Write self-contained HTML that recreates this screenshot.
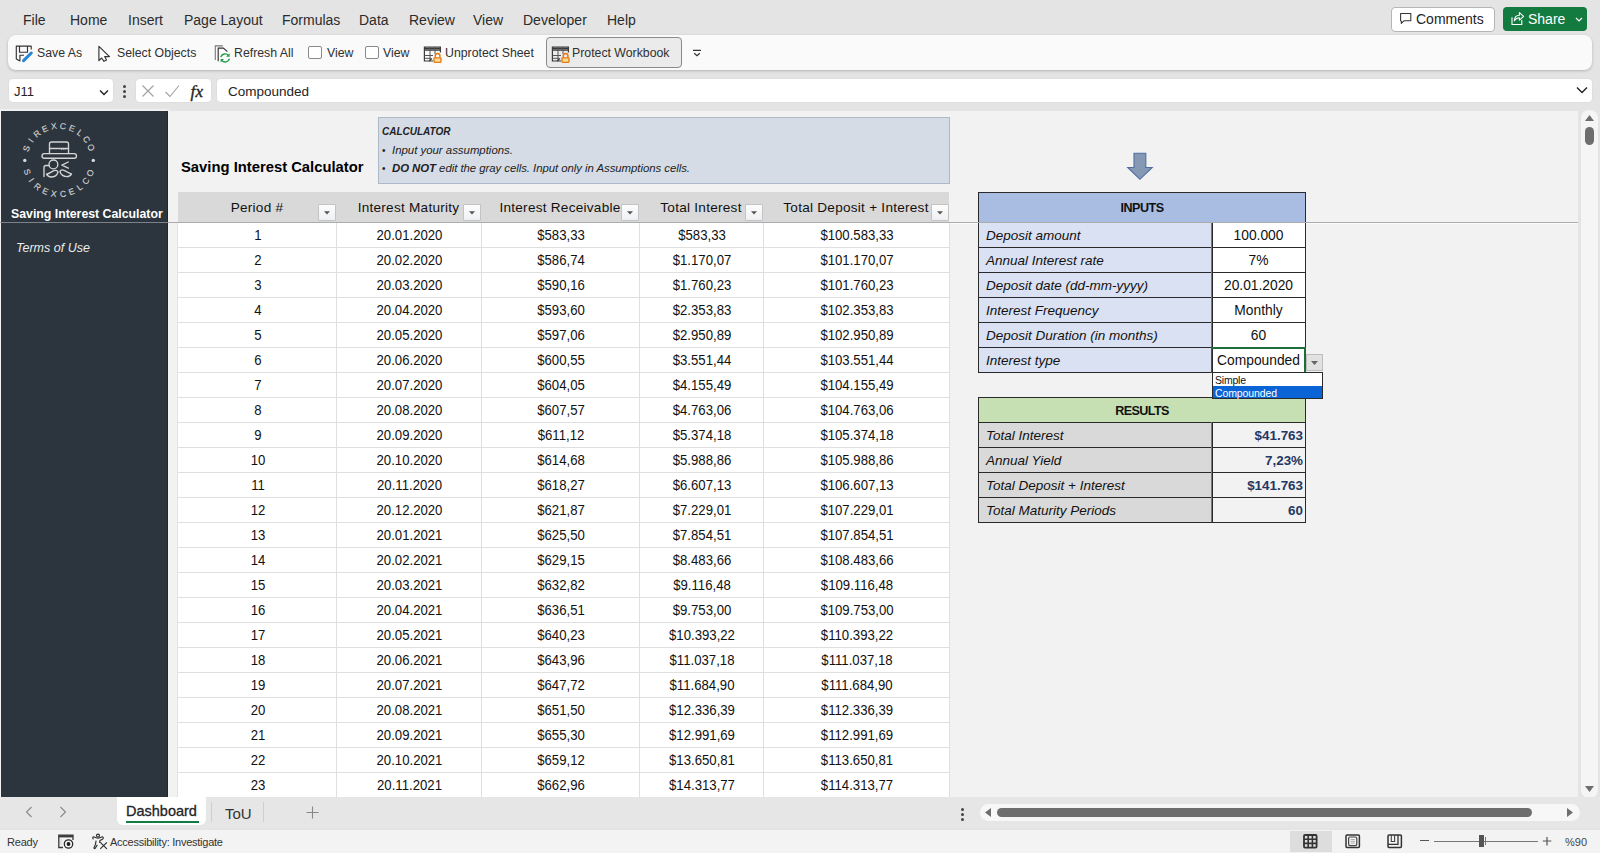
<!DOCTYPE html>
<html><head><meta charset="utf-8"><title>Saving Interest Calculator</title>
<style>
html,body{margin:0;padding:0;}
body{width:1600px;height:853px;overflow:hidden;position:relative;background:#e4e4e4;font-family:"Liberation Sans",sans-serif;}
.a{position:absolute;}
.t{position:absolute;line-height:1;white-space:nowrap;}
svg{position:absolute;overflow:visible;}
</style></head><body>
<div class="t" style="left:23px;top:13.15px;font-size:14px;color:#2b2b2b;">File</div>
<div class="t" style="left:70px;top:13.15px;font-size:14px;color:#2b2b2b;">Home</div>
<div class="t" style="left:128px;top:13.15px;font-size:14px;color:#2b2b2b;">Insert</div>
<div class="t" style="left:184px;top:13.15px;font-size:14px;color:#2b2b2b;">Page Layout</div>
<div class="t" style="left:282px;top:13.15px;font-size:14px;color:#2b2b2b;">Formulas</div>
<div class="t" style="left:359px;top:13.15px;font-size:14px;color:#2b2b2b;">Data</div>
<div class="t" style="left:409px;top:13.15px;font-size:14px;color:#2b2b2b;">Review</div>
<div class="t" style="left:473px;top:13.15px;font-size:14px;color:#2b2b2b;">View</div>
<div class="t" style="left:523px;top:13.15px;font-size:14px;color:#2b2b2b;">Developer</div>
<div class="t" style="left:607px;top:13.15px;font-size:14px;color:#2b2b2b;">Help</div>
<div class="a" style="left:1391px;top:6.5px;width:104px;height:25px;background:#fff;border:1px solid #b5b5b5;border-radius:4px;box-sizing:border-box;"></div>
<svg style="left:1399px;top:12px" width="14" height="14" viewBox="0 0 14 14"><path d="M1.6 1.4H11.8V8.7H5.2L2.3 11.4V9.2L1.6 8.7Z" fill="none" stroke="#333" stroke-width="1.05" stroke-linejoin="round"/></svg><div class="t" style="left:1416px;top:12.15px;font-size:14px;color:#242424;">Comments</div>
<div class="a" style="left:1503px;top:7px;width:84px;height:24px;background:#137b40;border-radius:4px;"></div>
<svg style="left:1510px;top:10px" width="16" height="16" viewBox="0 0 16 16"><path d="M2 7.3V14.5H11.8V10" fill="none" stroke="#fff" stroke-width="1.1"/><path d="M4.3 10.8C4.5 7.2 6.8 5.3 9.4 5.3V2.6L13.6 6.4L9.4 10.1V7.8C7.5 7.8 5.6 8.8 4.3 10.8Z" fill="none" stroke="#fff" stroke-width="1.1" stroke-linejoin="round"/></svg>
<div class="t" style="left:1528px;top:12.15px;font-size:14px;color:#fff;">Share</div>
<svg style="left:1575px;top:17px" width="8" height="5" viewBox="0 0 8 5"><path d="M1 1l3 3 3-3" fill="none" stroke="#fff" stroke-width="1.2"/></svg>
<div class="a" style="left:8px;top:35px;width:1584px;height:35px;background:#fafafa;border-radius:8px;box-shadow:0 1px 3px rgba(0,0,0,0.22);"></div>
<svg style="left:15px;top:45px" width="18" height="18" viewBox="0 0 18 18"><path d="M16.2 4.6V1.1H1.3V13.9L4.9 16V10.2H9" fill="none" stroke="#333" stroke-width="1.15" stroke-linejoin="round"/><path d="M4.5 1.1V7.2H12.5V1.1" fill="none" stroke="#333" stroke-width="1.15"/><path d="M8.6 15.6L16.3 8" stroke="#2486d6" stroke-width="3" stroke-linecap="round"/><path d="M7.4 16.8l1.2-3.2 2 2z" fill="#2486d6"/></svg>
<div class="t" style="left:37px;top:47.09px;font-size:12.3px;color:#303030;">Save As</div>
<svg style="left:97px;top:45px" width="14" height="18" viewBox="0 0 14 18"><path d="M1.9 1.4V15.7L4.6 13L7 16.3L9.5 15.1L7.7 11.6H12.5Z" fill="none" stroke="#333" stroke-width="1.15" stroke-linejoin="round"/></svg>
<div class="t" style="left:117px;top:47.09px;font-size:12.3px;color:#303030;">Select Objects</div>
<svg style="left:214px;top:44px" width="18" height="19" viewBox="0 0 18 19"><path d="M1.3 16.1V1.9H8.8" fill="none" stroke="#777" stroke-width="1.1"/><path d="M4.2 17.3V4.1H9.4L13.4 7.6" fill="none" stroke="#333" stroke-width="1.15"/><path d="M6.8 13.2a4.3 4.3 0 0 1 7.6-1.6M15.4 14.6a4.3 4.3 0 0 1-7.6 1.8" fill="none" stroke="#1f9d46" stroke-width="1.4"/><path d="M15.6 9.3v3.4h-3.4z" fill="#1f9d46"/><path d="M6.6 18.4v-3.4h3.4z" fill="#1f9d46"/></svg>
<div class="t" style="left:234px;top:47.09px;font-size:12.3px;color:#303030;">Refresh All</div>
<div class="a" style="left:308px;top:45.5px;width:14px;height:13.5px;border:1px solid #8a8a8a;border-radius:2px;box-sizing:border-box;background:#fff;"></div>
<div class="t" style="left:327px;top:47.09px;font-size:12.3px;color:#303030;">View</div>
<div class="a" style="left:365px;top:45.5px;width:14px;height:13.5px;border:1px solid #8a8a8a;border-radius:2px;box-sizing:border-box;background:#fff;"></div>
<div class="t" style="left:383px;top:47.09px;font-size:12.3px;color:#303030;">View</div>
<svg style="left:423px;top:44px" width="19" height="19" viewBox="0 0 19 19"><path d="M10.2 17H1.4V3H17.4V8.5" fill="none" stroke="#3a3a3a" stroke-width="1.2"/><path d="M1.4 4.6H17.4" stroke="#3a3a3a" stroke-width="2.2"/><path d="M1.4 6.4H17.4M1.4 11.5H10M1.4 14.3H8M7 3V17M12 3V10" fill="none" stroke="#555" stroke-width="1"/><path d="M6 17L9 14.5" stroke="#3a3a3a" stroke-width="1.1"/><rect x="11" y="13.8" width="7" height="4.6" rx="0.8" fill="#f7dc8e" stroke="#e67812" stroke-width="1.3"/><path d="M12.3 13.6V11.7a2.3 2.3 0 0 1 4.6 0V13.6" fill="none" stroke="#e67812" stroke-width="1.5"/></svg>
<div class="t" style="left:445px;top:47.09px;font-size:12.3px;color:#303030;">Unprotect Sheet</div>
<div class="a" style="left:546px;top:37px;width:136px;height:31px;background:#ebebeb;border:1px solid #8a8a8a;border-radius:4px;box-sizing:border-box;"></div>
<svg style="left:551px;top:44px" width="19" height="19" viewBox="0 0 19 19"><path d="M10.2 17H1.4V3H17.4V8.5" fill="none" stroke="#3a3a3a" stroke-width="1.2"/><path d="M1.4 4.6H17.4" stroke="#3a3a3a" stroke-width="2.2"/><path d="M1.4 6.4H17.4M1.4 11.5H10M1.4 14.3H8M7 3V17M12 3V10" fill="none" stroke="#555" stroke-width="1"/><path d="M6 17L9 14.5" stroke="#3a3a3a" stroke-width="1.1"/><rect x="11" y="13.8" width="7" height="4.6" rx="0.8" fill="#f7dc8e" stroke="#e67812" stroke-width="1.3"/><path d="M12.3 13.6V11.7a2.3 2.3 0 0 1 4.6 0V13.6" fill="none" stroke="#e67812" stroke-width="1.5"/></svg>
<div class="t" style="left:572px;top:47.09px;font-size:12.3px;color:#303030;">Protect Workbook</div>
<svg style="left:692px;top:48px" width="10" height="10" viewBox="0 0 10 10"><path d="M1 2.3h8M2.2 5.2l2.8 2.6 2.8-2.6" fill="none" stroke="#333" stroke-width="1.2"/></svg>
<div class="a" style="left:9px;top:79px;width:104px;height:23px;background:#fff;border-radius:4px;box-shadow:0 0 0 0.5px #d8d8d8;"></div>
<div class="t" style="left:14px;top:85.00px;font-size:13px;color:#242424;">J11</div>
<svg style="left:99px;top:89px" width="10" height="7" viewBox="0 0 10 7"><path d="M1 1.5l4 4 4-4" fill="none" stroke="#222" stroke-width="1.4"/></svg>
<div class="a" style="left:123px;top:85px;width:3px;height:3px;background:#444;border-radius:50%;"></div>
<div class="a" style="left:123px;top:90px;width:3px;height:3px;background:#444;border-radius:50%;"></div>
<div class="a" style="left:123px;top:95px;width:3px;height:3px;background:#444;border-radius:50%;"></div>
<div class="a" style="left:136px;top:79px;width:75px;height:23px;background:#fff;border-radius:4px;box-shadow:0 0 0 0.5px #d8d8d8;"></div>
<svg style="left:141px;top:84px" width="14" height="14" viewBox="0 0 14 14"><path d="M1.5 1.5l11 11M12.5 1.5l-11 11" stroke="#a0a0a0" stroke-width="1.1"/></svg>
<svg style="left:164px;top:84px" width="16" height="14" viewBox="0 0 16 14"><path d="M1.5 8l4.5 4.5 9-11" fill="none" stroke="#a0a0a0" stroke-width="1.1"/></svg>
<div class="t" style="left:190.5px;top:82.61px;font-size:17px;color:#222;font-family:Liberation Serif,serif;-webkit-text-stroke:0.35px #222;letter-spacing:0.3px;"><i>fx</i></div>
<div class="a" style="left:217px;top:79px;width:1375px;height:23px;background:#fff;border-radius:4px;box-shadow:0 0 0 0.5px #d8d8d8;"></div>
<div class="t" style="left:228px;top:84.57px;font-size:13.5px;color:#242424;">Compounded</div>
<svg style="left:1576px;top:86px" width="12" height="8" viewBox="0 0 12 8"><path d="M1 1.5l5 5 5-5" fill="none" stroke="#222" stroke-width="1.4"/></svg>
<div class="a" style="left:0px;top:111px;width:1578px;height:686px;background:#f2f2f2;"></div>
<div class="a" style="left:0px;top:109px;width:169px;height:2px;background:#efefef;"></div>
<div class="a" style="left:1px;top:111px;width:167px;height:686px;background:#2c353d;"></div>
<div class="a" style="left:167px;top:111px;width:1px;height:686px;background:#1f262d;"></div>
<svg style="left:10px;top:115px" width="100" height="90" viewBox="0 0 100 90">
<g font-family="Liberation Sans" font-size="8.6" fill="#d2d2d2" stroke="#d2d2d2" stroke-width="0.15" text-anchor="middle" dominant-baseline="central"><text x="16.49" y="33.57" transform="rotate(-70.0 16.49 33.57)">S</text><text x="20.77" y="25.39" transform="rotate(-54.7 20.77 25.39)">I</text><text x="27.07" y="18.64" transform="rotate(-39.3 27.07 18.64)">R</text><text x="34.93" y="13.79" transform="rotate(-24.0 34.93 13.79)">E</text><text x="43.79" y="11.20" transform="rotate(-8.7 43.79 11.20)">X</text><text x="53.02" y="11.03" transform="rotate(6.7 53.02 11.03)">C</text><text x="61.96" y="13.32" transform="rotate(22.0 61.96 13.32)">E</text><text x="69.98" y="17.89" transform="rotate(37.3 69.98 17.89)">L</text><text x="76.51" y="24.42" transform="rotate(52.7 76.51 24.42)">C</text><text x="81.08" y="32.44" transform="rotate(68.0 81.08 32.44)">O</text><text x="17.24" y="56.96" transform="rotate(70.0 17.24 56.96)">S</text><text x="21.43" y="64.95" transform="rotate(54.7 21.43 64.95)">I</text><text x="27.58" y="71.54" transform="rotate(39.3 27.58 71.54)">R</text><text x="35.25" y="76.28" transform="rotate(24.0 35.25 76.28)">E</text><text x="43.91" y="78.81" transform="rotate(8.7 43.91 78.81)">X</text><text x="52.92" y="78.97" transform="rotate(-6.7 52.92 78.97)">C</text><text x="61.66" y="76.74" transform="rotate(-22.0 61.66 76.74)">E</text><text x="69.50" y="72.28" transform="rotate(-37.3 69.50 72.28)">L</text><text x="75.88" y="65.90" transform="rotate(-52.7 75.88 65.90)">C</text><text x="80.34" y="58.06" transform="rotate(-68.0 80.34 58.06)">O</text></g>
<circle cx="14.8" cy="45.4" r="1.7" fill="#d9d9d9"/><circle cx="83.3" cy="45.4" r="1.7" fill="#d9d9d9"/>
<g fill="none" stroke="#d4d4d4" stroke-width="1.35" stroke-linecap="round" stroke-linejoin="round">
<path d="M39.5 38.5v-9.5a2 2 0 0 1 2-2h15a2 2 0 0 1 2 2v9.5"/>
<path d="M39.5 33.5h19"/>
<rect x="32" y="38.6" width="34.5" height="4.6" rx="2.3"/>
<circle cx="43.4" cy="49.4" r="4.4"/>
<path d="M34 61.5v-9a2 2 0 0 1 2-2h3"/>
<path d="M58.3 47l-6.4 3.1 6.4 3.1"/>
<path d="M36.5 59.2c3 -0.5 5 -2.5 7.5-3.5c2-0.8 4 -0.2 4 1.5c-1 3-4 4.8-7 4.8c-2 0-3.5-1-4.5-2.8z"/>
<path d="M61.5 58.8c-3 -0.5 -5 -2.5 -7.5-3.5c-2-0.8 -4 -0.2 -4 1.5c1 3 4 4.8 7 4.8c2 0 3.5-1 4.5-2.8z"/>
</g><path d="M51 34.2h5" stroke="#d9d9d9" stroke-width="1" stroke-dasharray="1 0.8"/></svg>
<div class="t" style="left:11px;top:207.59px;font-size:12.3px;color:#fff;font-weight:bold;">Saving Interest Calculator</div>
<div class="t" style="left:16px;top:241.92px;font-size:12.5px;color:#ebebeb;font-style:italic;">Terms of Use</div>
<div class="t" style="left:181px;top:159.97px;font-size:14.8px;color:#000;font-weight:bold;">Saving Interest Calculator</div>
<div class="a" style="left:378px;top:117px;width:572px;height:67px;background:#d6dce5;border:1px solid #adb9ca;box-sizing:border-box;"></div>
<div class="t" style="left:382px;top:126.53px;font-size:10px;color:#222;font-weight:bold;font-style:italic;">CALCULATOR</div>
<div class="t" style="left:382px;top:146.03px;font-size:10px;color:#222;">&bull;</div>
<div class="t" style="left:392px;top:144.85px;font-size:11.4px;color:#222;font-style:italic;">Input your assumptions.</div>
<div class="t" style="left:382px;top:164.03px;font-size:10px;color:#222;">&bull;</div>
<div class="t" style="left:392px;top:162.85px;font-size:11.4px;color:#222;font-style:italic;letter-spacing:-0.05px;"><b>DO NOT</b> edit the gray cells. Input only in Assumptions cells.</div>
<div class="a" style="left:178px;top:192px;width:771px;height:30px;background:#d9d9d9;"></div>
<div class="a" style="left:178px;top:223px;width:771px;height:574px;background:#fff;"></div>
<div class="a" style="left:177px;top:223px;width:1px;height:574px;background:#e2e2e2;"></div>
<div class="t" style="left:178px;top:201.49px;font-size:13.6px;color:#111;letter-spacing:0.25px;width:158px;text-align:center;">Period #</div>
<div class="a" style="left:318px;top:204px;width:18px;height:17px;background:linear-gradient(#fdfdfd,#eef0f3);border:1px solid #c3c3c3;border-radius:1px;box-sizing:border-box;"></div>
<svg style="left:324px;top:211px" width="6" height="4" viewBox="0 0 6 4"><path d="M0 0.3h6L3 3.6z" fill="#555"/></svg>
<div class="t" style="left:336px;top:201.49px;font-size:13.6px;color:#111;letter-spacing:0.25px;width:145px;text-align:center;">Interest Maturity</div>
<div class="a" style="left:463px;top:204px;width:18px;height:17px;background:linear-gradient(#fdfdfd,#eef0f3);border:1px solid #c3c3c3;border-radius:1px;box-sizing:border-box;"></div>
<svg style="left:469px;top:211px" width="6" height="4" viewBox="0 0 6 4"><path d="M0 0.3h6L3 3.6z" fill="#555"/></svg>
<div class="t" style="left:481px;top:201.49px;font-size:13.6px;color:#111;letter-spacing:0.25px;width:158px;text-align:center;">Interest Receivable</div>
<div class="a" style="left:621px;top:204px;width:18px;height:17px;background:linear-gradient(#fdfdfd,#eef0f3);border:1px solid #c3c3c3;border-radius:1px;box-sizing:border-box;"></div>
<svg style="left:627px;top:211px" width="6" height="4" viewBox="0 0 6 4"><path d="M0 0.3h6L3 3.6z" fill="#555"/></svg>
<div class="t" style="left:639px;top:201.49px;font-size:13.6px;color:#111;letter-spacing:0.25px;width:124px;text-align:center;">Total Interest</div>
<div class="a" style="left:745px;top:204px;width:18px;height:17px;background:linear-gradient(#fdfdfd,#eef0f3);border:1px solid #c3c3c3;border-radius:1px;box-sizing:border-box;"></div>
<svg style="left:751px;top:211px" width="6" height="4" viewBox="0 0 6 4"><path d="M0 0.3h6L3 3.6z" fill="#555"/></svg>
<div class="t" style="left:763px;top:201.49px;font-size:13.6px;color:#111;letter-spacing:0.25px;width:186px;text-align:center;">Total Deposit + Interest</div>
<div class="a" style="left:931px;top:204px;width:18px;height:17px;background:linear-gradient(#fdfdfd,#eef0f3);border:1px solid #c3c3c3;border-radius:1px;box-sizing:border-box;"></div>
<svg style="left:937px;top:211px" width="6" height="4" viewBox="0 0 6 4"><path d="M0 0.3h6L3 3.6z" fill="#555"/></svg>
<div class="a" style="left:178px;top:247px;width:771px;height:1px;background:#dfdfdf;"></div>
<div class="a" style="left:178px;top:272px;width:771px;height:1px;background:#dfdfdf;"></div>
<div class="a" style="left:178px;top:297px;width:771px;height:1px;background:#dfdfdf;"></div>
<div class="a" style="left:178px;top:322px;width:771px;height:1px;background:#dfdfdf;"></div>
<div class="a" style="left:178px;top:347px;width:771px;height:1px;background:#dfdfdf;"></div>
<div class="a" style="left:178px;top:372px;width:771px;height:1px;background:#dfdfdf;"></div>
<div class="a" style="left:178px;top:397px;width:771px;height:1px;background:#dfdfdf;"></div>
<div class="a" style="left:178px;top:422px;width:771px;height:1px;background:#dfdfdf;"></div>
<div class="a" style="left:178px;top:447px;width:771px;height:1px;background:#dfdfdf;"></div>
<div class="a" style="left:178px;top:472px;width:771px;height:1px;background:#dfdfdf;"></div>
<div class="a" style="left:178px;top:497px;width:771px;height:1px;background:#dfdfdf;"></div>
<div class="a" style="left:178px;top:522px;width:771px;height:1px;background:#dfdfdf;"></div>
<div class="a" style="left:178px;top:547px;width:771px;height:1px;background:#dfdfdf;"></div>
<div class="a" style="left:178px;top:572px;width:771px;height:1px;background:#dfdfdf;"></div>
<div class="a" style="left:178px;top:597px;width:771px;height:1px;background:#dfdfdf;"></div>
<div class="a" style="left:178px;top:622px;width:771px;height:1px;background:#dfdfdf;"></div>
<div class="a" style="left:178px;top:647px;width:771px;height:1px;background:#dfdfdf;"></div>
<div class="a" style="left:178px;top:672px;width:771px;height:1px;background:#dfdfdf;"></div>
<div class="a" style="left:178px;top:697px;width:771px;height:1px;background:#dfdfdf;"></div>
<div class="a" style="left:178px;top:722px;width:771px;height:1px;background:#dfdfdf;"></div>
<div class="a" style="left:178px;top:747px;width:771px;height:1px;background:#dfdfdf;"></div>
<div class="a" style="left:178px;top:772px;width:771px;height:1px;background:#dfdfdf;"></div>
<div class="a" style="left:178px;top:797px;width:771px;height:1px;background:#dfdfdf;"></div>
<div class="a" style="left:336px;top:223px;width:1px;height:574px;background:#dfdfdf;"></div>
<div class="a" style="left:481px;top:223px;width:1px;height:574px;background:#dfdfdf;"></div>
<div class="a" style="left:639px;top:223px;width:1px;height:574px;background:#dfdfdf;"></div>
<div class="a" style="left:763px;top:223px;width:1px;height:574px;background:#dfdfdf;"></div>
<div class="a" style="left:949px;top:223px;width:1px;height:574px;background:#dfdfdf;"></div>
<div class="t" style="left:178.8px;top:227.81px;font-size:14.4px;color:#111;width:158px;text-align:center;transform:scaleX(0.915);">1</div>
<div class="t" style="left:336.8px;top:227.81px;font-size:14.4px;color:#111;width:145px;text-align:center;transform:scaleX(0.915);">20.01.2020</div>
<div class="t" style="left:481.8px;top:227.81px;font-size:14.4px;color:#111;width:158px;text-align:center;transform:scaleX(0.915);">$583,33</div>
<div class="t" style="left:639.8px;top:227.81px;font-size:14.4px;color:#111;width:124px;text-align:center;transform:scaleX(0.915);">$583,33</div>
<div class="t" style="left:763.8px;top:227.81px;font-size:14.4px;color:#111;width:186px;text-align:center;transform:scaleX(0.915);">$100.583,33</div>
<div class="t" style="left:178.8px;top:252.81px;font-size:14.4px;color:#111;width:158px;text-align:center;transform:scaleX(0.915);">2</div>
<div class="t" style="left:336.8px;top:252.81px;font-size:14.4px;color:#111;width:145px;text-align:center;transform:scaleX(0.915);">20.02.2020</div>
<div class="t" style="left:481.8px;top:252.81px;font-size:14.4px;color:#111;width:158px;text-align:center;transform:scaleX(0.915);">$586,74</div>
<div class="t" style="left:639.8px;top:252.81px;font-size:14.4px;color:#111;width:124px;text-align:center;transform:scaleX(0.915);">$1.170,07</div>
<div class="t" style="left:763.8px;top:252.81px;font-size:14.4px;color:#111;width:186px;text-align:center;transform:scaleX(0.915);">$101.170,07</div>
<div class="t" style="left:178.8px;top:277.81px;font-size:14.4px;color:#111;width:158px;text-align:center;transform:scaleX(0.915);">3</div>
<div class="t" style="left:336.8px;top:277.81px;font-size:14.4px;color:#111;width:145px;text-align:center;transform:scaleX(0.915);">20.03.2020</div>
<div class="t" style="left:481.8px;top:277.81px;font-size:14.4px;color:#111;width:158px;text-align:center;transform:scaleX(0.915);">$590,16</div>
<div class="t" style="left:639.8px;top:277.81px;font-size:14.4px;color:#111;width:124px;text-align:center;transform:scaleX(0.915);">$1.760,23</div>
<div class="t" style="left:763.8px;top:277.81px;font-size:14.4px;color:#111;width:186px;text-align:center;transform:scaleX(0.915);">$101.760,23</div>
<div class="t" style="left:178.8px;top:302.81px;font-size:14.4px;color:#111;width:158px;text-align:center;transform:scaleX(0.915);">4</div>
<div class="t" style="left:336.8px;top:302.81px;font-size:14.4px;color:#111;width:145px;text-align:center;transform:scaleX(0.915);">20.04.2020</div>
<div class="t" style="left:481.8px;top:302.81px;font-size:14.4px;color:#111;width:158px;text-align:center;transform:scaleX(0.915);">$593,60</div>
<div class="t" style="left:639.8px;top:302.81px;font-size:14.4px;color:#111;width:124px;text-align:center;transform:scaleX(0.915);">$2.353,83</div>
<div class="t" style="left:763.8px;top:302.81px;font-size:14.4px;color:#111;width:186px;text-align:center;transform:scaleX(0.915);">$102.353,83</div>
<div class="t" style="left:178.8px;top:327.81px;font-size:14.4px;color:#111;width:158px;text-align:center;transform:scaleX(0.915);">5</div>
<div class="t" style="left:336.8px;top:327.81px;font-size:14.4px;color:#111;width:145px;text-align:center;transform:scaleX(0.915);">20.05.2020</div>
<div class="t" style="left:481.8px;top:327.81px;font-size:14.4px;color:#111;width:158px;text-align:center;transform:scaleX(0.915);">$597,06</div>
<div class="t" style="left:639.8px;top:327.81px;font-size:14.4px;color:#111;width:124px;text-align:center;transform:scaleX(0.915);">$2.950,89</div>
<div class="t" style="left:763.8px;top:327.81px;font-size:14.4px;color:#111;width:186px;text-align:center;transform:scaleX(0.915);">$102.950,89</div>
<div class="t" style="left:178.8px;top:352.81px;font-size:14.4px;color:#111;width:158px;text-align:center;transform:scaleX(0.915);">6</div>
<div class="t" style="left:336.8px;top:352.81px;font-size:14.4px;color:#111;width:145px;text-align:center;transform:scaleX(0.915);">20.06.2020</div>
<div class="t" style="left:481.8px;top:352.81px;font-size:14.4px;color:#111;width:158px;text-align:center;transform:scaleX(0.915);">$600,55</div>
<div class="t" style="left:639.8px;top:352.81px;font-size:14.4px;color:#111;width:124px;text-align:center;transform:scaleX(0.915);">$3.551,44</div>
<div class="t" style="left:763.8px;top:352.81px;font-size:14.4px;color:#111;width:186px;text-align:center;transform:scaleX(0.915);">$103.551,44</div>
<div class="t" style="left:178.8px;top:377.81px;font-size:14.4px;color:#111;width:158px;text-align:center;transform:scaleX(0.915);">7</div>
<div class="t" style="left:336.8px;top:377.81px;font-size:14.4px;color:#111;width:145px;text-align:center;transform:scaleX(0.915);">20.07.2020</div>
<div class="t" style="left:481.8px;top:377.81px;font-size:14.4px;color:#111;width:158px;text-align:center;transform:scaleX(0.915);">$604,05</div>
<div class="t" style="left:639.8px;top:377.81px;font-size:14.4px;color:#111;width:124px;text-align:center;transform:scaleX(0.915);">$4.155,49</div>
<div class="t" style="left:763.8px;top:377.81px;font-size:14.4px;color:#111;width:186px;text-align:center;transform:scaleX(0.915);">$104.155,49</div>
<div class="t" style="left:178.8px;top:402.81px;font-size:14.4px;color:#111;width:158px;text-align:center;transform:scaleX(0.915);">8</div>
<div class="t" style="left:336.8px;top:402.81px;font-size:14.4px;color:#111;width:145px;text-align:center;transform:scaleX(0.915);">20.08.2020</div>
<div class="t" style="left:481.8px;top:402.81px;font-size:14.4px;color:#111;width:158px;text-align:center;transform:scaleX(0.915);">$607,57</div>
<div class="t" style="left:639.8px;top:402.81px;font-size:14.4px;color:#111;width:124px;text-align:center;transform:scaleX(0.915);">$4.763,06</div>
<div class="t" style="left:763.8px;top:402.81px;font-size:14.4px;color:#111;width:186px;text-align:center;transform:scaleX(0.915);">$104.763,06</div>
<div class="t" style="left:178.8px;top:427.81px;font-size:14.4px;color:#111;width:158px;text-align:center;transform:scaleX(0.915);">9</div>
<div class="t" style="left:336.8px;top:427.81px;font-size:14.4px;color:#111;width:145px;text-align:center;transform:scaleX(0.915);">20.09.2020</div>
<div class="t" style="left:481.8px;top:427.81px;font-size:14.4px;color:#111;width:158px;text-align:center;transform:scaleX(0.915);">$611,12</div>
<div class="t" style="left:639.8px;top:427.81px;font-size:14.4px;color:#111;width:124px;text-align:center;transform:scaleX(0.915);">$5.374,18</div>
<div class="t" style="left:763.8px;top:427.81px;font-size:14.4px;color:#111;width:186px;text-align:center;transform:scaleX(0.915);">$105.374,18</div>
<div class="t" style="left:178.8px;top:452.81px;font-size:14.4px;color:#111;width:158px;text-align:center;transform:scaleX(0.915);">10</div>
<div class="t" style="left:336.8px;top:452.81px;font-size:14.4px;color:#111;width:145px;text-align:center;transform:scaleX(0.915);">20.10.2020</div>
<div class="t" style="left:481.8px;top:452.81px;font-size:14.4px;color:#111;width:158px;text-align:center;transform:scaleX(0.915);">$614,68</div>
<div class="t" style="left:639.8px;top:452.81px;font-size:14.4px;color:#111;width:124px;text-align:center;transform:scaleX(0.915);">$5.988,86</div>
<div class="t" style="left:763.8px;top:452.81px;font-size:14.4px;color:#111;width:186px;text-align:center;transform:scaleX(0.915);">$105.988,86</div>
<div class="t" style="left:178.8px;top:477.81px;font-size:14.4px;color:#111;width:158px;text-align:center;transform:scaleX(0.915);">11</div>
<div class="t" style="left:336.8px;top:477.81px;font-size:14.4px;color:#111;width:145px;text-align:center;transform:scaleX(0.915);">20.11.2020</div>
<div class="t" style="left:481.8px;top:477.81px;font-size:14.4px;color:#111;width:158px;text-align:center;transform:scaleX(0.915);">$618,27</div>
<div class="t" style="left:639.8px;top:477.81px;font-size:14.4px;color:#111;width:124px;text-align:center;transform:scaleX(0.915);">$6.607,13</div>
<div class="t" style="left:763.8px;top:477.81px;font-size:14.4px;color:#111;width:186px;text-align:center;transform:scaleX(0.915);">$106.607,13</div>
<div class="t" style="left:178.8px;top:502.81px;font-size:14.4px;color:#111;width:158px;text-align:center;transform:scaleX(0.915);">12</div>
<div class="t" style="left:336.8px;top:502.81px;font-size:14.4px;color:#111;width:145px;text-align:center;transform:scaleX(0.915);">20.12.2020</div>
<div class="t" style="left:481.8px;top:502.81px;font-size:14.4px;color:#111;width:158px;text-align:center;transform:scaleX(0.915);">$621,87</div>
<div class="t" style="left:639.8px;top:502.81px;font-size:14.4px;color:#111;width:124px;text-align:center;transform:scaleX(0.915);">$7.229,01</div>
<div class="t" style="left:763.8px;top:502.81px;font-size:14.4px;color:#111;width:186px;text-align:center;transform:scaleX(0.915);">$107.229,01</div>
<div class="t" style="left:178.8px;top:527.81px;font-size:14.4px;color:#111;width:158px;text-align:center;transform:scaleX(0.915);">13</div>
<div class="t" style="left:336.8px;top:527.81px;font-size:14.4px;color:#111;width:145px;text-align:center;transform:scaleX(0.915);">20.01.2021</div>
<div class="t" style="left:481.8px;top:527.81px;font-size:14.4px;color:#111;width:158px;text-align:center;transform:scaleX(0.915);">$625,50</div>
<div class="t" style="left:639.8px;top:527.81px;font-size:14.4px;color:#111;width:124px;text-align:center;transform:scaleX(0.915);">$7.854,51</div>
<div class="t" style="left:763.8px;top:527.81px;font-size:14.4px;color:#111;width:186px;text-align:center;transform:scaleX(0.915);">$107.854,51</div>
<div class="t" style="left:178.8px;top:552.81px;font-size:14.4px;color:#111;width:158px;text-align:center;transform:scaleX(0.915);">14</div>
<div class="t" style="left:336.8px;top:552.81px;font-size:14.4px;color:#111;width:145px;text-align:center;transform:scaleX(0.915);">20.02.2021</div>
<div class="t" style="left:481.8px;top:552.81px;font-size:14.4px;color:#111;width:158px;text-align:center;transform:scaleX(0.915);">$629,15</div>
<div class="t" style="left:639.8px;top:552.81px;font-size:14.4px;color:#111;width:124px;text-align:center;transform:scaleX(0.915);">$8.483,66</div>
<div class="t" style="left:763.8px;top:552.81px;font-size:14.4px;color:#111;width:186px;text-align:center;transform:scaleX(0.915);">$108.483,66</div>
<div class="t" style="left:178.8px;top:577.81px;font-size:14.4px;color:#111;width:158px;text-align:center;transform:scaleX(0.915);">15</div>
<div class="t" style="left:336.8px;top:577.81px;font-size:14.4px;color:#111;width:145px;text-align:center;transform:scaleX(0.915);">20.03.2021</div>
<div class="t" style="left:481.8px;top:577.81px;font-size:14.4px;color:#111;width:158px;text-align:center;transform:scaleX(0.915);">$632,82</div>
<div class="t" style="left:639.8px;top:577.81px;font-size:14.4px;color:#111;width:124px;text-align:center;transform:scaleX(0.915);">$9.116,48</div>
<div class="t" style="left:763.8px;top:577.81px;font-size:14.4px;color:#111;width:186px;text-align:center;transform:scaleX(0.915);">$109.116,48</div>
<div class="t" style="left:178.8px;top:602.81px;font-size:14.4px;color:#111;width:158px;text-align:center;transform:scaleX(0.915);">16</div>
<div class="t" style="left:336.8px;top:602.81px;font-size:14.4px;color:#111;width:145px;text-align:center;transform:scaleX(0.915);">20.04.2021</div>
<div class="t" style="left:481.8px;top:602.81px;font-size:14.4px;color:#111;width:158px;text-align:center;transform:scaleX(0.915);">$636,51</div>
<div class="t" style="left:639.8px;top:602.81px;font-size:14.4px;color:#111;width:124px;text-align:center;transform:scaleX(0.915);">$9.753,00</div>
<div class="t" style="left:763.8px;top:602.81px;font-size:14.4px;color:#111;width:186px;text-align:center;transform:scaleX(0.915);">$109.753,00</div>
<div class="t" style="left:178.8px;top:627.81px;font-size:14.4px;color:#111;width:158px;text-align:center;transform:scaleX(0.915);">17</div>
<div class="t" style="left:336.8px;top:627.81px;font-size:14.4px;color:#111;width:145px;text-align:center;transform:scaleX(0.915);">20.05.2021</div>
<div class="t" style="left:481.8px;top:627.81px;font-size:14.4px;color:#111;width:158px;text-align:center;transform:scaleX(0.915);">$640,23</div>
<div class="t" style="left:639.8px;top:627.81px;font-size:14.4px;color:#111;width:124px;text-align:center;transform:scaleX(0.915);">$10.393,22</div>
<div class="t" style="left:763.8px;top:627.81px;font-size:14.4px;color:#111;width:186px;text-align:center;transform:scaleX(0.915);">$110.393,22</div>
<div class="t" style="left:178.8px;top:652.81px;font-size:14.4px;color:#111;width:158px;text-align:center;transform:scaleX(0.915);">18</div>
<div class="t" style="left:336.8px;top:652.81px;font-size:14.4px;color:#111;width:145px;text-align:center;transform:scaleX(0.915);">20.06.2021</div>
<div class="t" style="left:481.8px;top:652.81px;font-size:14.4px;color:#111;width:158px;text-align:center;transform:scaleX(0.915);">$643,96</div>
<div class="t" style="left:639.8px;top:652.81px;font-size:14.4px;color:#111;width:124px;text-align:center;transform:scaleX(0.915);">$11.037,18</div>
<div class="t" style="left:763.8px;top:652.81px;font-size:14.4px;color:#111;width:186px;text-align:center;transform:scaleX(0.915);">$111.037,18</div>
<div class="t" style="left:178.8px;top:677.81px;font-size:14.4px;color:#111;width:158px;text-align:center;transform:scaleX(0.915);">19</div>
<div class="t" style="left:336.8px;top:677.81px;font-size:14.4px;color:#111;width:145px;text-align:center;transform:scaleX(0.915);">20.07.2021</div>
<div class="t" style="left:481.8px;top:677.81px;font-size:14.4px;color:#111;width:158px;text-align:center;transform:scaleX(0.915);">$647,72</div>
<div class="t" style="left:639.8px;top:677.81px;font-size:14.4px;color:#111;width:124px;text-align:center;transform:scaleX(0.915);">$11.684,90</div>
<div class="t" style="left:763.8px;top:677.81px;font-size:14.4px;color:#111;width:186px;text-align:center;transform:scaleX(0.915);">$111.684,90</div>
<div class="t" style="left:178.8px;top:702.81px;font-size:14.4px;color:#111;width:158px;text-align:center;transform:scaleX(0.915);">20</div>
<div class="t" style="left:336.8px;top:702.81px;font-size:14.4px;color:#111;width:145px;text-align:center;transform:scaleX(0.915);">20.08.2021</div>
<div class="t" style="left:481.8px;top:702.81px;font-size:14.4px;color:#111;width:158px;text-align:center;transform:scaleX(0.915);">$651,50</div>
<div class="t" style="left:639.8px;top:702.81px;font-size:14.4px;color:#111;width:124px;text-align:center;transform:scaleX(0.915);">$12.336,39</div>
<div class="t" style="left:763.8px;top:702.81px;font-size:14.4px;color:#111;width:186px;text-align:center;transform:scaleX(0.915);">$112.336,39</div>
<div class="t" style="left:178.8px;top:727.81px;font-size:14.4px;color:#111;width:158px;text-align:center;transform:scaleX(0.915);">21</div>
<div class="t" style="left:336.8px;top:727.81px;font-size:14.4px;color:#111;width:145px;text-align:center;transform:scaleX(0.915);">20.09.2021</div>
<div class="t" style="left:481.8px;top:727.81px;font-size:14.4px;color:#111;width:158px;text-align:center;transform:scaleX(0.915);">$655,30</div>
<div class="t" style="left:639.8px;top:727.81px;font-size:14.4px;color:#111;width:124px;text-align:center;transform:scaleX(0.915);">$12.991,69</div>
<div class="t" style="left:763.8px;top:727.81px;font-size:14.4px;color:#111;width:186px;text-align:center;transform:scaleX(0.915);">$112.991,69</div>
<div class="t" style="left:178.8px;top:752.81px;font-size:14.4px;color:#111;width:158px;text-align:center;transform:scaleX(0.915);">22</div>
<div class="t" style="left:336.8px;top:752.81px;font-size:14.4px;color:#111;width:145px;text-align:center;transform:scaleX(0.915);">20.10.2021</div>
<div class="t" style="left:481.8px;top:752.81px;font-size:14.4px;color:#111;width:158px;text-align:center;transform:scaleX(0.915);">$659,12</div>
<div class="t" style="left:639.8px;top:752.81px;font-size:14.4px;color:#111;width:124px;text-align:center;transform:scaleX(0.915);">$13.650,81</div>
<div class="t" style="left:763.8px;top:752.81px;font-size:14.4px;color:#111;width:186px;text-align:center;transform:scaleX(0.915);">$113.650,81</div>
<div class="t" style="left:178.8px;top:777.81px;font-size:14.4px;color:#111;width:158px;text-align:center;transform:scaleX(0.915);">23</div>
<div class="t" style="left:336.8px;top:777.81px;font-size:14.4px;color:#111;width:145px;text-align:center;transform:scaleX(0.915);">20.11.2021</div>
<div class="t" style="left:481.8px;top:777.81px;font-size:14.4px;color:#111;width:158px;text-align:center;transform:scaleX(0.915);">$662,96</div>
<div class="t" style="left:639.8px;top:777.81px;font-size:14.4px;color:#111;width:124px;text-align:center;transform:scaleX(0.915);">$14.313,77</div>
<div class="t" style="left:763.8px;top:777.81px;font-size:14.4px;color:#111;width:186px;text-align:center;transform:scaleX(0.915);">$114.313,77</div>
<svg style="left:1126px;top:152px" width="28" height="29" viewBox="0 0 28 29"><path d="M8 1.3H19.8V15.5H26.2L13.9 27.3L1.7 15.5H8Z" fill="#8599b5" stroke="#4f6ea3" stroke-width="1.1" stroke-linejoin="miter"/></svg><div class="a" style="left:978px;top:192px;width:328px;height:181px;background:#dae1f3;"></div>
<div class="a" style="left:978px;top:192px;width:328px;height:30px;background:#a9bde3;"></div>
<div class="a" style="left:1212px;top:222px;width:93px;height:150px;background:#fff;"></div>
<div class="t" style="left:978px;top:202.33px;font-size:12.6px;color:#111;font-weight:bold;letter-spacing:-0.5px;width:328px;text-align:center;">INPUTS</div>
<div class="t" style="left:986px;top:229.07px;font-size:13.5px;color:#111;font-style:italic;">Deposit amount</div>
<div class="t" style="left:1212px;top:229.12px;font-size:13.8px;color:#111;width:93px;text-align:center;">100.000</div>
<div class="t" style="left:986px;top:254.07px;font-size:13.5px;color:#111;font-style:italic;">Annual Interest rate</div>
<div class="t" style="left:1212px;top:254.12px;font-size:13.8px;color:#111;width:93px;text-align:center;">7%</div>
<div class="t" style="left:986px;top:279.07px;font-size:13.5px;color:#111;font-style:italic;">Deposit date (dd-mm-yyyy)</div>
<div class="t" style="left:1212px;top:279.12px;font-size:13.8px;color:#111;width:93px;text-align:center;">20.01.2020</div>
<div class="t" style="left:986px;top:304.07px;font-size:13.5px;color:#111;font-style:italic;">Interest Frequency</div>
<div class="t" style="left:1212px;top:304.12px;font-size:13.8px;color:#111;width:93px;text-align:center;">Monthly</div>
<div class="t" style="left:986px;top:329.07px;font-size:13.5px;color:#111;font-style:italic;">Deposit Duration (in months)</div>
<div class="t" style="left:1212px;top:329.12px;font-size:13.8px;color:#111;width:93px;text-align:center;">60</div>
<div class="t" style="left:986px;top:354.07px;font-size:13.5px;color:#111;font-style:italic;">Interest type</div>
<div class="t" style="left:1212px;top:354.12px;font-size:13.8px;color:#111;width:93px;text-align:center;">Compounded</div>
<div class="a" style="left:978px;top:192px;width:328px;height:181px;border:1px solid #2a2a2a;box-sizing:border-box;"></div>
<div class="a" style="left:978px;top:247px;width:328px;height:1px;background:#2a2a2a;"></div>
<div class="a" style="left:978px;top:272px;width:328px;height:1px;background:#2a2a2a;"></div>
<div class="a" style="left:978px;top:297px;width:328px;height:1px;background:#2a2a2a;"></div>
<div class="a" style="left:978px;top:322px;width:328px;height:1px;background:#2a2a2a;"></div>
<div class="a" style="left:978px;top:347px;width:328px;height:1px;background:#2a2a2a;"></div>
<div class="a" style="left:1211px;top:222px;width:1px;height:151px;background:#777;"></div>
<div class="a" style="left:1212px;top:222px;width:1px;height:151px;background:#2a2a2a;"></div>
<div class="a" style="left:1211px;top:347px;width:95px;height:26px;border:2px solid #1e6e3c;border-bottom-width:1px;border-left-width:1.5px;box-sizing:border-box;"></div>
<div class="a" style="left:1306px;top:354px;width:17px;height:17px;background:#e1e1e1;border:1px solid #bdbdbd;box-sizing:border-box;"></div>
<svg style="left:1311px;top:361px" width="7" height="4" viewBox="0 0 7 4"><path d="M0 0h7L3.5 4z" fill="#666"/></svg>
<div class="a" style="left:978px;top:397px;width:328px;height:126px;background:#d9d9d9;"></div>
<div class="a" style="left:978px;top:397px;width:328px;height:25px;background:#c6e0b4;"></div>
<div class="a" style="left:1212px;top:422px;width:93px;height:100px;background:#f2f2f2;"></div>
<div class="t" style="left:978px;top:405.33px;font-size:12.6px;color:#111;font-weight:bold;letter-spacing:-0.6px;width:328px;text-align:center;">RESULTS</div>
<div class="t" style="left:986px;top:429.07px;font-size:13.5px;color:#111;font-style:italic;">Total Interest</div>
<div class="t" style="left:1212px;top:428.86px;font-size:13.4px;color:#1f3864;font-weight:bold;width:91px;text-align:right;">$41.763</div>
<div class="t" style="left:986px;top:454.07px;font-size:13.5px;color:#111;font-style:italic;">Annual Yield</div>
<div class="t" style="left:1212px;top:453.86px;font-size:13.4px;color:#1f3864;font-weight:bold;width:91px;text-align:right;">7,23%</div>
<div class="t" style="left:986px;top:479.07px;font-size:13.5px;color:#111;font-style:italic;">Total Deposit + Interest</div>
<div class="t" style="left:1212px;top:478.86px;font-size:13.4px;color:#1f3864;font-weight:bold;width:91px;text-align:right;">$141.763</div>
<div class="t" style="left:986px;top:504.07px;font-size:13.5px;color:#111;font-style:italic;">Total Maturity Periods</div>
<div class="t" style="left:1212px;top:503.86px;font-size:13.4px;color:#1f3864;font-weight:bold;width:91px;text-align:right;">60</div>
<div class="a" style="left:978px;top:397px;width:328px;height:126px;border:1px solid #2a2a2a;box-sizing:border-box;"></div>
<div class="a" style="left:978px;top:422px;width:328px;height:1px;background:#2a2a2a;"></div>
<div class="a" style="left:978px;top:447px;width:328px;height:1px;background:#2a2a2a;"></div>
<div class="a" style="left:978px;top:472px;width:328px;height:1px;background:#2a2a2a;"></div>
<div class="a" style="left:978px;top:497px;width:328px;height:1px;background:#2a2a2a;"></div>
<div class="a" style="left:1211px;top:422px;width:1px;height:100px;background:#777;"></div>
<div class="a" style="left:1212px;top:422px;width:1px;height:100px;background:#2a2a2a;"></div>
<div class="a" style="left:1212px;top:372px;width:111px;height:27px;background:#fff;border:1px solid #2a2a2a;box-sizing:border-box;"></div>
<div class="a" style="left:1213px;top:386px;width:109px;height:12px;background:#0a64d6;"></div>
<div class="t" style="left:1215px;top:375.11px;font-size:10.5px;color:#111;letter-spacing:-0.2px;">Simple</div>
<div class="t" style="left:1215px;top:387.61px;font-size:10.5px;color:#fff;letter-spacing:-0.1px;">Compounded</div>
<div class="a" style="left:0px;top:222px;width:1578px;height:1px;background:#acacac;"></div>
<div class="a" style="left:950px;top:223px;width:28px;height:1px;background:#fbfbfb;"></div>
<div class="a" style="left:1306px;top:223px;width:272px;height:1px;background:#fbfbfb;"></div>
<div class="a" style="left:1px;top:222px;width:167px;height:1px;background:#7d8288;"></div>
<div class="a" style="left:1581px;top:110px;width:17px;height:688px;background:#f5f5f5;border-radius:8px;"></div>
<svg style="left:1584px;top:114px" width="11" height="8" viewBox="0 0 11 8"><path d="M5.5 1L10 7H1z" fill="#6e6e6e"/></svg>
<div class="a" style="left:1585px;top:127px;width:9px;height:18px;background:#6e6e6e;border-radius:5px;"></div>
<svg style="left:1584px;top:785px" width="11" height="8" viewBox="0 0 11 8"><path d="M5.5 7L10 1H1z" fill="#6e6e6e"/></svg>
<div class="a" style="left:0px;top:797px;width:1600px;height:31px;background:#e6e6e6;"></div>
<svg style="left:25px;top:806px" width="8" height="12" viewBox="0 0 8 12"><path d="M6.5 1L1.5 6l5 5" fill="none" stroke="#888" stroke-width="1.1"/></svg>
<svg style="left:59px;top:806px" width="8" height="12" viewBox="0 0 8 12"><path d="M1.5 1l5 5-5 5" fill="none" stroke="#888" stroke-width="1.1"/></svg>
<div class="a" style="left:117px;top:797px;width:89px;height:28px;background:#fff;border-radius:0 0 6px 6px;"></div>
<div class="t" style="left:126px;top:803.73px;font-size:14.5px;color:#242424;-webkit-text-stroke:0.3px #242424;">Dashboard</div>
<div class="a" style="left:126px;top:821px;width:73px;height:2px;background:#107c41;"></div>
<div class="a" style="left:211px;top:802px;width:1px;height:20px;background:#cfcfcf;"></div>
<div class="t" style="left:225px;top:806.30px;font-size:15px;color:#333;">ToU</div>
<div class="a" style="left:263px;top:802px;width:1px;height:20px;background:#cfcfcf;"></div>
<svg style="left:306px;top:806px" width="13" height="13" viewBox="0 0 13 13"><path d="M6.5 0.5v12M0.5 6.5h12" stroke="#888" stroke-width="1.1"/></svg>
<div class="a" style="left:961px;top:808px;width:3px;height:3px;background:#444;border-radius:50%;"></div>
<div class="a" style="left:961px;top:813px;width:3px;height:3px;background:#444;border-radius:50%;"></div>
<div class="a" style="left:961px;top:818px;width:3px;height:3px;background:#444;border-radius:50%;"></div>
<div class="a" style="left:980px;top:804px;width:600px;height:17px;background:#f7f7f7;border-radius:9px;"></div>
<svg style="left:984px;top:807px" width="8" height="11" viewBox="0 0 8 11"><path d="M1 5.5L7 1v9z" fill="#6e6e6e"/></svg>
<div class="a" style="left:997px;top:808px;width:535px;height:9px;background:#6e6e6e;border-radius:5px;"></div>
<svg style="left:1566px;top:807px" width="8" height="11" viewBox="0 0 8 11"><path d="M7 5.5L1 1v9z" fill="#6e6e6e"/></svg>
<div class="a" style="left:0px;top:830px;width:1600px;height:23px;background:#f3f3f3;"></div>
<div class="t" style="left:7px;top:836.69px;font-size:11px;color:#333;letter-spacing:-0.2px;">Ready</div>
<svg style="left:57px;top:833px" width="18" height="17" viewBox="0 0 18 17"><path d="M6 14.5H1.8V2.2H16V7" fill="none" stroke="#3a3a3a" stroke-width="1.3"/><rect x="1.8" y="2.2" width="14.2" height="2.2" fill="#3a3a3a"/><path d="M4 6.5v6" stroke="#999" stroke-width="0.8" stroke-dasharray="1 1"/><circle cx="11.5" cy="11" r="4.2" fill="#f3f3f3" stroke="#2a2a2a" stroke-width="1.3"/><circle cx="11.5" cy="11" r="1.9" fill="#1a1a1a"/></svg><svg style="left:91px;top:833px" width="18" height="17" viewBox="0 0 18 17"><circle cx="7" cy="2.6" r="1.5" fill="none" stroke="#2a2a2a" stroke-width="1.1"/><path d="M2.5 6.2c-1.2-0.8-1-2.2 0.2-2.4c1.5 0.8 2.8 1.4 4.3 1.4s2.8-0.6 4.3-1.4c1.2 0.2 1.4 1.6 0.2 2.4l-2.6 1.4l-0.2 2.4M5.1 7.6l-0.6 3.5l-1.5 3.6c-0.3 0.9 0.8 1.3 1.2 0.6l2.1-3.4" fill="none" stroke="#2a2a2a" stroke-width="1.1" stroke-linejoin="round"/><path d="M9.3 9.3l6.6 6.6M15.9 9.3l-6.6 6.6" stroke="#2a2a2a" stroke-width="1.1"/></svg><div class="t" style="left:110px;top:836.69px;font-size:11px;color:#333;letter-spacing:-0.25px;">Accessibility: Investigate</div>
<div class="a" style="left:1290px;top:831px;width:42px;height:21px;background:#dddddd;"></div>
<svg style="left:1303px;top:834px" width="15" height="15" viewBox="0 0 15 15"><rect x="1" y="1" width="12.6" height="12.6" rx="1" fill="none" stroke="#333" stroke-width="1.8"/><path d="M5.2 1v12.6M9.4 1v12.6M1 5.2h12.6M1 9.4h12.6" stroke="#333" stroke-width="1.6"/></svg>
<svg style="left:1345px;top:834px" width="16" height="15" viewBox="0 0 16 15"><rect x="1" y="1" width="13.4" height="12.6" rx="1" fill="none" stroke="#333" stroke-width="1.5"/><rect x="3.6" y="3" width="8.2" height="8.6" rx="1.6" fill="none" stroke="#444" stroke-width="1.2"/><path d="M5.6 5.5h4.2M5.6 7.3h4.2M5.6 9.1h4.2" stroke="#999" stroke-width="0.8"/></svg>
<svg style="left:1387px;top:834px" width="16" height="15" viewBox="0 0 16 15"><rect x="1" y="1" width="13.4" height="12.6" rx="1" fill="none" stroke="#333" stroke-width="1.5"/><path d="M1 10.3H11V1" fill="none" stroke="#333" stroke-width="1.3"/><path d="M4.3 1v6.5H7.6V1" fill="none" stroke="#444" stroke-width="1.1"/></svg>
<div class="a" style="left:1420px;top:840px;width:9px;height:1.3px;background:#555;"></div>
<div class="a" style="left:1434px;top:841px;width:104px;height:1px;background:#777;"></div>
<div class="a" style="left:1479px;top:835px;width:5px;height:12px;background:#555;"></div>
<div class="a" style="left:1485px;top:837px;width:1px;height:8px;background:#777;"></div>
<svg style="left:1542px;top:836px" width="10" height="10" viewBox="0 0 10 10"><path d="M5 1v8.5M0.8 5h8.5" stroke="#555" stroke-width="1.2"/></svg>
<div class="t" style="left:1565px;top:836.69px;font-size:11px;color:#444;">%90</div>
</body></html>
